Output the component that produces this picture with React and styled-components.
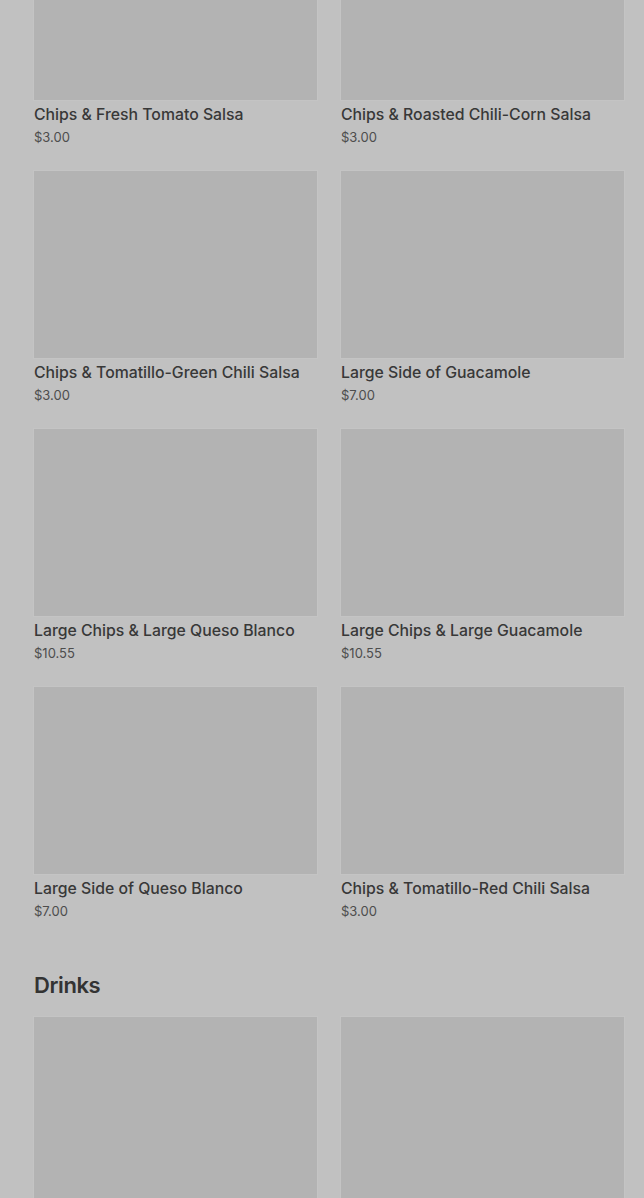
import React from "react";
import styled, { createGlobalStyle } from "styled-components";

const GlobalStyle = createGlobalStyle`
  html, body {
    margin: 0;
    padding: 0;
    background: #c1c1c1;
    overflow: hidden;
  }
  body {
    font-family: Inter, "Noto Sans", Roboto, sans-serif;
    color: #333333;
  }
`;

const Page = styled.div`
  height: 1198px;
  overflow: hidden;
  background: #c1c1c1;
`;

// page is scrolled, first row of images starts above the fold
const Main = styled.main`
  margin-top: -87px;
  padding: 0 20px 0 34px;
`;

const Section = styled.section`
  & + & {
    margin-top: 51px;
  }
`;

const SectionTitle = styled.h2`
  margin: 0 0 18px;
  font-size: 22px;
  line-height: 28px;
  font-weight: 600;
  letter-spacing: -0.4px;
  color: #333333;
`;

const Grid = styled.div`
  display: grid;
  grid-template-columns: 283px 283px;
  column-gap: 24px;
  row-gap: 25px;
`;

const Card = styled.div`
  display: flex;
  flex-direction: column;
`;

const Photo = styled.div`
  height: 187px;
  background: #b3b3b3;
  box-shadow: 0 0 0 1px rgba(255, 255, 255, 0.06);
`;

const Name = styled.div`
  margin-top: 5px;
  font-size: 15.8px;
  line-height: 20px;
  font-weight: 500;
  color: #383838;
  white-space: nowrap;
`;

const Price = styled.div`
  margin-top: 3px;
  font-size: 13px;
  line-height: 18px;
  font-weight: 400;
  color: #4d4d4d;
`;

const sides = [
  { name: "Chips & Fresh Tomato Salsa", price: "$3.00" },
  { name: "Chips & Roasted Chili-Corn Salsa", price: "$3.00" },
  { name: "Chips & Tomatillo-Green Chili Salsa", price: "$3.00" },
  { name: "Large Side of Guacamole", price: "$7.00" },
  { name: "Large Chips & Large Queso Blanco", price: "$10.55" },
  { name: "Large Chips & Large Guacamole", price: "$10.55" },
  { name: "Large Side of Queso Blanco", price: "$7.00" },
  { name: "Chips & Tomatillo-Red Chili Salsa", price: "$3.00" },
];

// only the photos of the drinks are above the fold
const drinks = [{ id: "water" }, { id: "soda" }];

function MenuItem({ item }) {
  return (
    <Card>
      <Photo />
      {item.name && <Name>{item.name}</Name>}
      {item.price && <Price>{item.price}</Price>}
    </Card>
  );
}

export default function App() {
  return (
    <Page>
      <GlobalStyle />
      <Main>
        <Section>
          <Grid>
            {sides.map((item) => (
              <MenuItem key={item.name} item={item} />
            ))}
          </Grid>
        </Section>
        <Section>
          <SectionTitle>Drinks</SectionTitle>
          <Grid>
            {drinks.map((item) => (
              <MenuItem key={item.id} item={item} />
            ))}
          </Grid>
        </Section>
      </Main>
    </Page>
  );
}
